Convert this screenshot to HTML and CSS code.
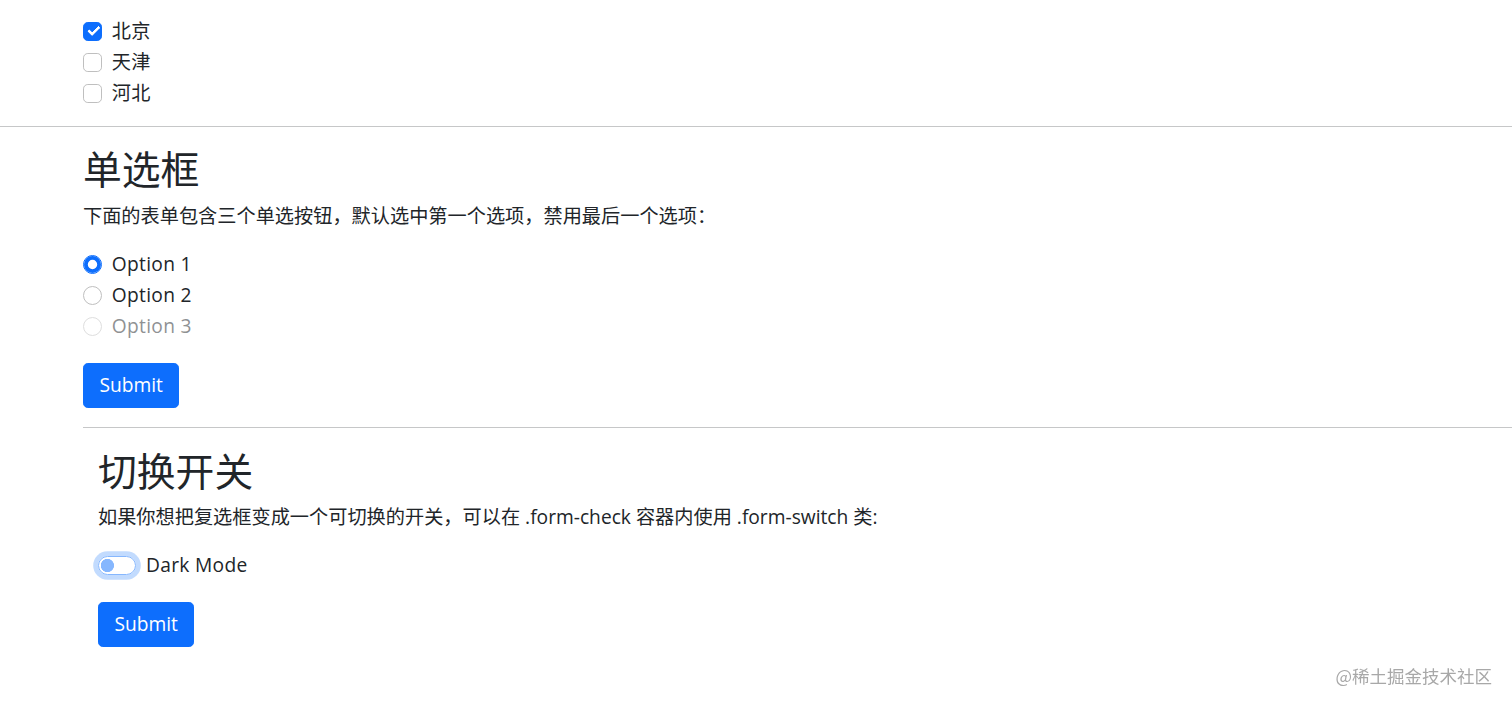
FILE: index.html
```html
<!DOCTYPE html>
<html lang="zh-CN">
<head>
  <meta charset="UTF-8">
  <meta name="viewport" content="width=device-width, initial-scale=1.0">
  <title>表单控件</title>
  <link rel="stylesheet" href="styles.css">
</head>
<body>
  <!-- 复选框 -->
  <div class="top">
    <div class="form-check">
      <input class="check-input" type="checkbox" id="city1" checked>
      <label for="city1">北京</label>
    </div>
    <div class="form-check">
      <input class="check-input" type="checkbox" id="city2">
      <label for="city2">天津</label>
    </div>
    <div class="form-check">
      <input class="check-input" type="checkbox" id="city3">
      <label for="city3">河北</label>
    </div>
  </div>

  <hr class="rule">

  <div class="page">
    <!-- 单选框 -->
    <h2>单选框</h2>
    <p>下面的表单包含三个单选按钮，默认选中第一个选项，禁用最后一个选项：</p>
    <form>
      <div class="group">
        <div class="form-check">
          <input class="radio-input" type="radio" name="opt" id="opt1" checked>
          <label for="opt1">Option 1</label>
        </div>
        <div class="form-check">
          <input class="radio-input" type="radio" name="opt" id="opt2">
          <label for="opt2">Option 2</label>
        </div>
        <div class="form-check disabled">
          <input class="radio-input" type="radio" name="opt" id="opt3" disabled>
          <label for="opt3">Option 3</label>
        </div>
      </div>
      <button type="button" class="btn">Submit</button>
    </form>

    <hr class="rule rule-inner">

    <!-- 切换开关 -->
    <div class="switch-demo">
      <h2>切换开关</h2>
      <p>如果你想把复选框变成一个可切换的开关，可以在 .form-check 容器内使用 .form-switch 类:</p>
      <form>
        <div class="group">
          <div class="form-check form-switch">
            <input class="switch-input" type="checkbox" id="dark">
            <label for="dark">Dark Mode</label>
          </div>
        </div>
        <button type="button" class="btn">Submit</button>
      </form>
    </div>
  </div>

  <div class="watermark">@稀土掘金技术社区</div>
</body>
</html>
```

FILE: styles.css
```css
body {
  margin: 0;
  font-family: "Open Sans", "Noto Sans CJK SC", sans-serif;
  font-size: 19.2px;
  line-height: 28.8px;
  color: #212529;
  background-color: #fff;
}
.top {
  padding: 17px 0 0 83px;
}
.rule {
  margin: 18px 0 19.2px;
  border: 0;
  border-top: 1px solid #c6c7c8;
  height: 0;
}
.rule-inner {
  margin-top: 19px;
  margin-bottom: 19.5px;
}
.page {
  padding-left: 83px;
}
.switch-demo {
  padding-left: 15px;
}
h2 {
  margin: 0 0 9.6px;
  font-size: 38.8px;
  line-height: 46px;
  font-weight: 400;
}
p {
  margin: 0 0 19.2px;
}
form {
  margin: 0;
}
.group {
  margin-bottom: 21.8px;
}
.form-check {
  display: flex;
  align-items: flex-start;
  min-height: 28.8px;
  margin-bottom: 2.4px;
}
.form-check label {
  margin-left: 9.6px;
  letter-spacing: 0.3px;
}
.check-input,
.radio-input {
  appearance: none;
  -webkit-appearance: none;
  width: 19.2px;
  height: 19.2px;
  margin: 4.8px 0 0;
  border: 1.2px solid #bfbfbf;
  background-color: #fff;
  flex-shrink: 0;
  position: relative;
  box-sizing: border-box;
}
.check-input {
  border-radius: 4.8px;
}
.check-input:checked {
  background-color: #0d6efd;
  border-color: #0d6efd;
}
.check-input:checked::after {
  content: "";
  position: absolute;
  left: 3.6px;
  top: 3.2px;
  width: 9px;
  height: 4.4px;
  border-left: 3px solid #fff;
  border-bottom: 3px solid #fff;
  transform: rotate(-45deg);
  transform-origin: center;
  box-sizing: content-box;
  border-radius: 1px;
}
.radio-input {
  border-radius: 50%;
}
.radio-input:checked {
  border-color: #0d6efd;
  box-shadow: inset 0 0 0 3.8px #0d6efd;
}
.disabled {
  opacity: 0.5;
}
.form-switch label {
  margin-left: 9.6px;
}
.switch-input {
  appearance: none;
  -webkit-appearance: none;
  width: 38.4px;
  height: 19.2px;
  margin: 4.8px 0 0;
  border: 1.2px solid #86b7fe;
  border-radius: 19.2px;
  box-sizing: border-box;
  background: radial-gradient(circle at 8.4px 50%, #86b7fe 6.3px, #fff 6.9px);
  box-shadow: 0 0 0 4.8px rgba(13, 110, 253, 0.25);
  flex-shrink: 0;
}
.btn {
  display: inline-block;
  font-family: inherit;
  font-size: 19.2px;
  line-height: 28.8px;
  padding: 7.2px 15.4px;
  color: #fff;
  background-color: #0d6efd;
  border: 1.2px solid #0d6efd;
  border-radius: 4.8px;
  cursor: pointer;
}
.watermark {
  position: fixed;
  right: 20px;
  bottom: 17px;
  font-size: 17.5px;
  line-height: 24px;
  color: #a8a8a8;
  font-family: "Noto Sans CJK SC", sans-serif;
}
```
